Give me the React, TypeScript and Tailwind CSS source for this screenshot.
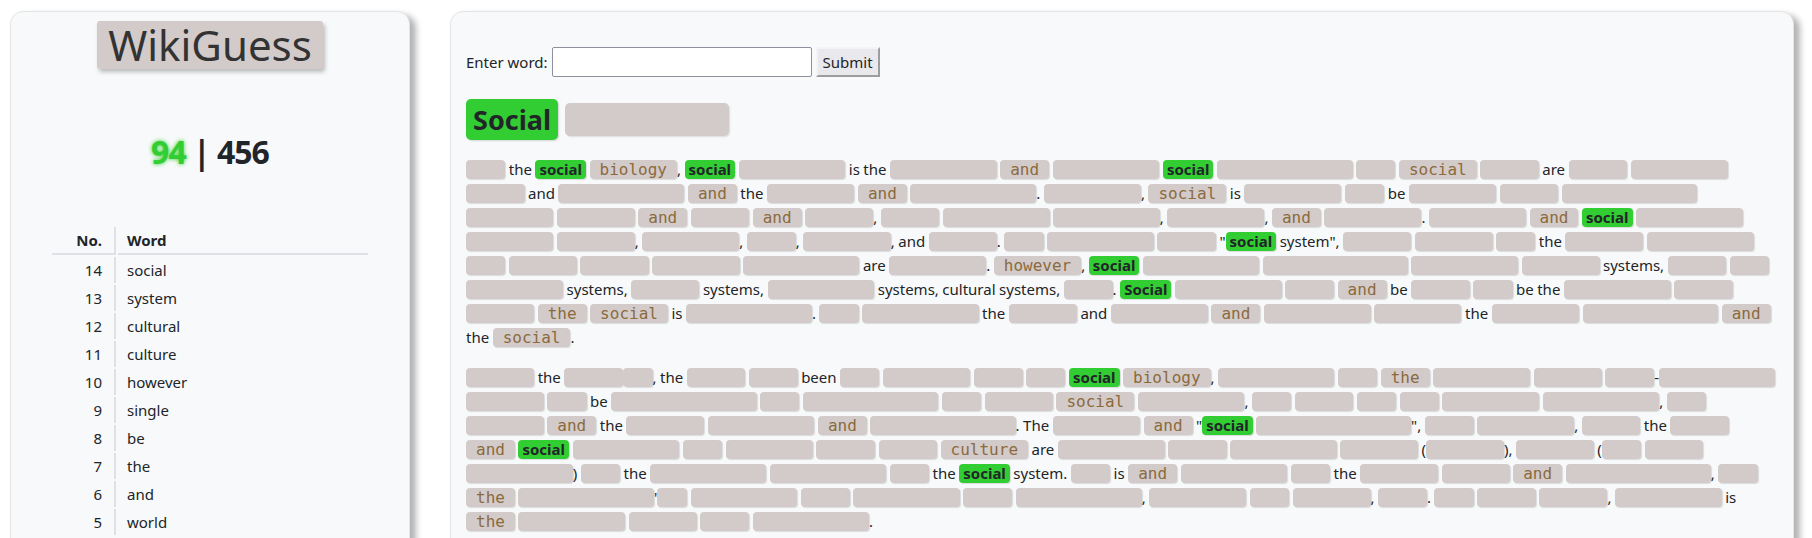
import React from 'react';

// markup: [n] hidden word of n letters, {w} matched guess, <w> revealed common word
const TITLE_HIDDEN = 10;

const PARAGRAPHS = [
  [
    '[2] the {social} <biology>, {social} [9] is the [9] <and> [9] {social} [12] [2] <social> [4] are [4] [8]',
    '[4] and [11] <and> the [7] <and> [11]. [8], <social> is [8] [2] be [7] [4] [12]',
    '[7] [6] <and> [4] <and> [5], [4] [9] [9], [8], <and> [8]. [8] <and> {social} [9]',
    '[7] [6], [8], [3], [7], and [5]. [2] [9] [4] "{social} system", [5] [6] [2] the [6] [9]',
    '[2] [5] [5] [7] [10] are [8]. <however>, {social} [10] [13] [9] [6] systems, [4] [2]',
    '[8] systems, [5] systems, [9] systems, cultural systems, [3]. {Social} [9] [3] <and> be [4] [2] be the [9] [4]',
    '[5] <the> <social> is [11]. [2] [10] the [5] and [8] <and> [9] [7] the [7] [12] <and>',
    'the <social>.',
  ],
  [
    '[5] the [4][1], the [4] [3] been [2] [7] [3] [2] {social} <biology>, [10] [2] <the> [8] [5] [3]-[10]',
    '[6] [2] be [13] [2] [12] [2] [5] <social> [9], [2] [4] [2] [2] [8] [10], [2]',
    '[6] <and> the [6] [9] <and> [13]. The [7] <and> "{social} [14]", [3] [8], [4] the [4]',
    '<and> {social} [9] [2] [7] [4] [4] <culture> are [9] [4] [9] [6] ([6]), [6] ([2] [4]',
    '[9]) [2] the [10] [10] [2] the {social} system. [2] is <and> [9] [2] the [6] [5] <and> [13], [2]',
    "<the> [12]'[1] [9] [3] [9] [3] [11], [8] [2] [6], [3]. [2] [4] [5], [9] is",
    '<the> [9] [5] [3] [10].',
  ],
];

const GUESSES = [
  { n: 14, word: 'social' },
  { n: 13, word: 'system' },
  { n: 12, word: 'cultural' },
  { n: 11, word: 'culture' },
  { n: 10, word: 'however' },
  { n: 9, word: 'single' },
  { n: 8, word: 'be' },
  { n: 7, word: 'the' },
  { n: 6, word: 'and' },
  { n: 5, word: 'world' },
];

type Tok = { kind: 'hidden' | 'revealed' | 'hit' | 'text'; value: string };

function parseLine(line: string): Tok[] {
  const out: Tok[] = [];
  const re = /\[(\d+)\]|\{([^}]+)\}|<([^>]+)>/g;
  let last = 0;
  let m: RegExpExecArray | null;
  while ((m = re.exec(line))) {
    if (m.index > last) out.push({ kind: 'text', value: line.slice(last, m.index) });
    if (m[1]) out.push({ kind: 'hidden', value: 'x'.repeat(Number(m[1])) });
    else if (m[2]) out.push({ kind: 'hit', value: m[2] });
    else out.push({ kind: 'revealed', value: m[3] });
    last = re.lastIndex;
  }
  if (last < line.length) out.push({ kind: 'text', value: line.slice(last) });
  return out;
}

const blockBase =
  "inline-block h-[19px] mt-[3px] align-top rounded-[4px] leading-[19px] shadow-[1px_1px_1px_rgba(0,0,0,0.12)]";

function Token({ tok }: { tok: Tok }) {
  if (tok.kind === 'text') return <>{tok.value}</>;
  if (tok.kind === 'hit') {
    return <span className={`${blockBase} bg-[#32cd32] px-[4px] font-bold text-[#212529]`}>{tok.value}</span>;
  }
  return (
    <span
      className={`${blockBase} bg-[#d3cbc9] px-[10px] font-['DejaVu_Sans_Mono',monospace] text-[16px] ${
        tok.kind === 'hidden' ? 'text-transparent' : 'text-[#8b6a3e]'
      }`}
    >
      {tok.value}
    </span>
  );
}

function Paragraph({ lines }: { lines: string[] }) {
  return (
    <div className="mb-[16px]">
      {lines.map((line, i) => (
        <div key={i} className="h-[24px] whitespace-nowrap leading-[24px] [word-spacing:-0.4px]">
          {parseLine(line).map((tok, j) => (
            <Token key={j} tok={tok} />
          ))}
        </div>
      ))}
    </div>
  );
}

function Sidebar() {
  return (
    <aside className="h-[600px] w-[400px] shrink-0 rounded-[13px] border border-[#e4e4e4] bg-[#f8f9fa] shadow-[6px_4px_6px_rgba(0,0,0,0.3)]">
      <div className="flex justify-center pt-[9px]">
        <h1 className="rounded-[3px] bg-[#d3cbc9] px-[11px] text-[42px] font-normal leading-[48px] text-[#333] shadow-[2px_3px_4px_rgba(0,0,0,0.25)]">
          WikiGuess
        </h1>
      </div>

      <div className="mt-[63px] text-center text-[32px] font-bold leading-[40px] tracking-[-1px]">
        <span className="text-[#32cd32] [text-shadow:0_0_4px_#32cd32]">94</span> | 456
      </div>

      <div className="mx-[41px] mt-[55px] flex flex-col gap-[2px] text-[15px]">
        <div className="grid grid-cols-[64px_1fr] gap-x-[2px] font-bold">
          <div className="h-[28px] border-r-2 border-b-2 border-[#dee2e6] pr-[12px] text-right leading-[26px]">No.</div>
          <div className="h-[28px] border-b-2 border-[#dee2e6] pl-[9px] leading-[26px]">Word</div>
        </div>
        {GUESSES.map((g) => (
          <div key={g.n} className="grid grid-cols-[64px_1fr] gap-x-[2px]">
            <div className="h-[26px] border-r-2 border-[#dee2e6] pr-[12px] text-right leading-[26px]">{g.n}</div>
            <div className="h-[26px] pl-[9px] leading-[26px]">{g.word}</div>
          </div>
        ))}
      </div>
    </aside>
  );
}

function Article() {
  return (
    <main className="h-[600px] w-[1344px] shrink-0 rounded-[13px] border border-[#e4e4e4] bg-[#f8f9fa] pl-[15px] pt-[35px] text-[15px] shadow-[6px_4px_6px_rgba(0,0,0,0.3)]">
      <form className="flex h-[30px] items-center" onSubmit={(e) => e.preventDefault()}>
        <label htmlFor="guess">Enter word:</label>
        <input
          id="guess"
          type="text"
          className="ml-[4px] h-[30px] w-[260px] rounded-[2px] border border-[#8f8f9d] bg-white px-1 outline-none"
        />
        <button
          type="submit"
          className="ml-[4px] h-[30px] border-2 border-t-[#f4f4f4] border-l-[#f4f4f4] border-r-[#9d9d9d] border-b-[#9d9d9d] bg-[#e9e9ed] px-[5px] leading-[24px]"
        >
          Submit
        </button>
      </form>

      <div className="mt-[22px] flex h-[41px] items-center gap-[7px]">
        <span className="h-[41px] rounded-[5px] bg-[#32cd32] px-[7px] text-[27px] font-bold leading-[41px] shadow-[1px_1px_2px_rgba(0,0,0,0.15)]">
          Social
        </span>
        <span className="h-[33px] rounded-[5px] bg-[#d3cbc9] px-[10px] font-['DejaVu_Sans_Mono',monospace] text-[24px] leading-[33px] text-transparent shadow-[1px_1px_2px_rgba(0,0,0,0.12)]">
          {'x'.repeat(TITLE_HIDDEN)}
        </span>
      </div>

      <div className="mt-[17px]">
        {PARAGRAPHS.map((lines, i) => (
          <Paragraph key={i} lines={lines} />
        ))}
      </div>
    </main>
  );
}

export default function App() {
  return (
    <div className="h-[538px] overflow-hidden bg-white font-['Noto_Sans',sans-serif] text-[#212529]">
      <div className="flex items-start gap-[40px] pl-[10px] pt-[11px]">
        <Sidebar />
        <Article />
      </div>
    </div>
  );
}
